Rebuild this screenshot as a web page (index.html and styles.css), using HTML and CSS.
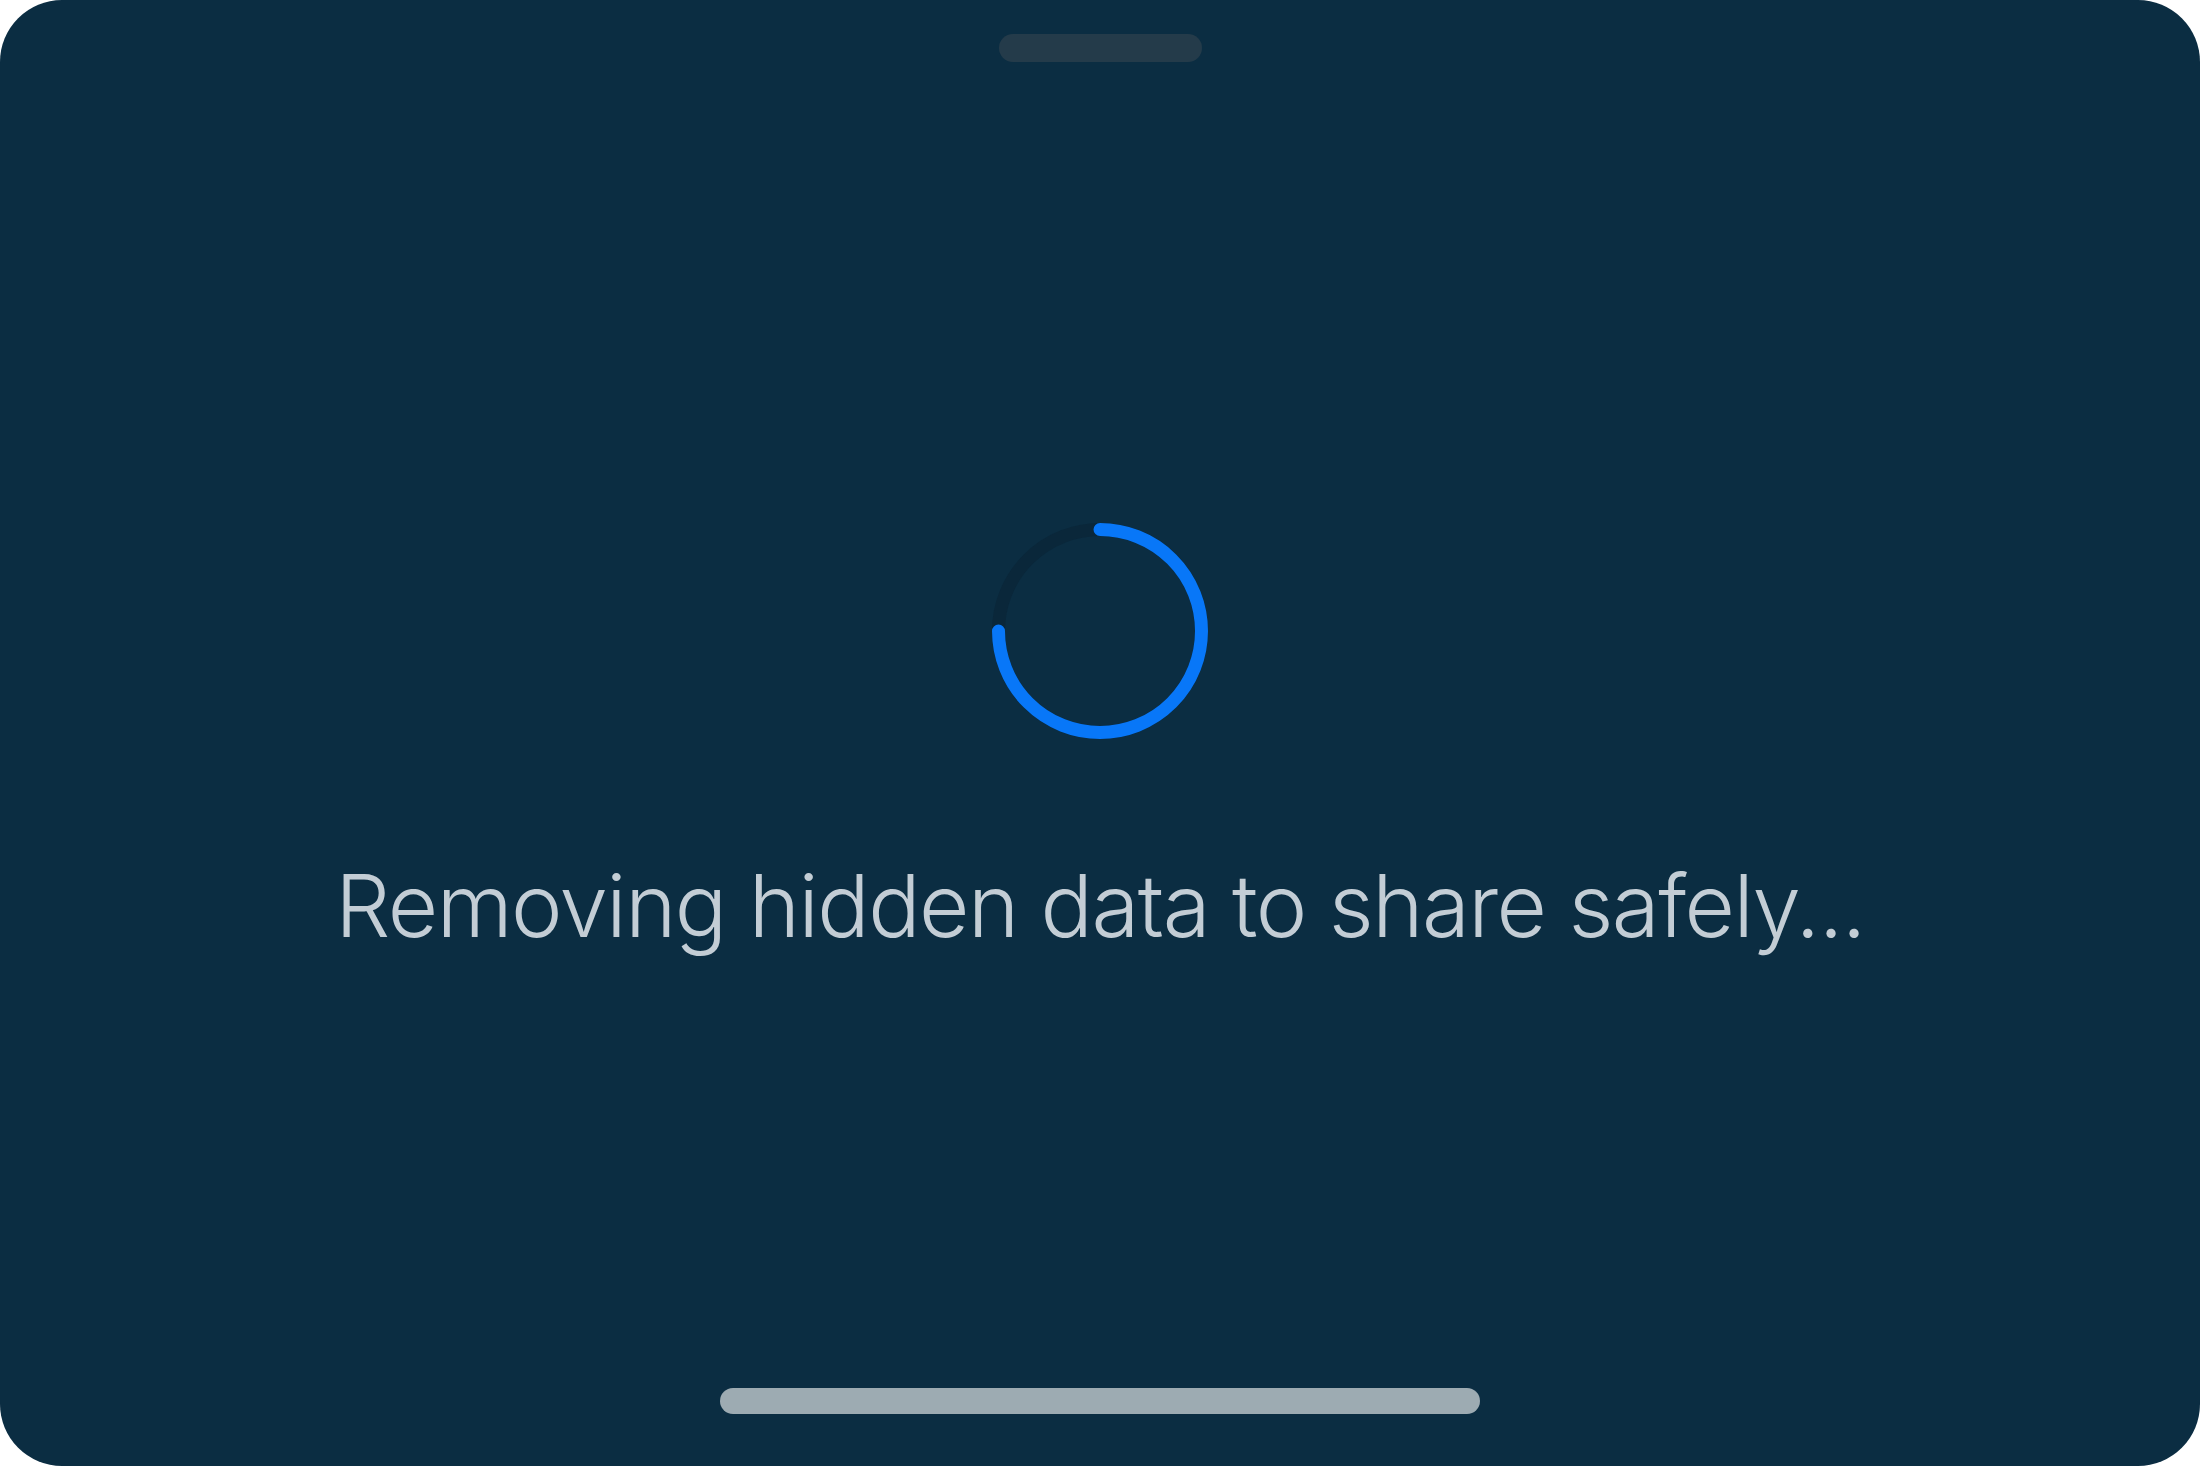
FILE: index.html
```html
<!DOCTYPE html>
<html lang="en">
<head>
<meta charset="utf-8">
<title>Removing hidden data</title>
<link rel="stylesheet" href="styles.css">
</head>
<body>
<div class="sheet">
  <div class="grabber"></div>
  <div class="spinner">
    <svg viewBox="0 0 216 216" width="216" height="216" aria-hidden="true">
      <circle class="track" cx="108" cy="108" r="101.5"></circle>
      <path class="arc" d="M108 6.5 A101.5 101.5 0 1 1 6.5 108"></path>
    </svg>
  </div>
  <p class="status">Removing hidden data to share safely...</p>
  <div class="spacer"></div>
  <div class="home-indicator"></div>
</div>
</body>
</html>
```

FILE: styles.css
```css
html, body {
  margin: 0;
  padding: 0;
  background: #ffffff;
}

body {
  width: 2200px;
  height: 1466px;
  overflow: hidden;
}

.sheet {
  box-sizing: border-box;
  width: 2200px;
  height: 1466px;
  background: #0b2d42;
  border-radius: 62px;
  display: flex;
  flex-direction: column;
  align-items: center;
  padding-top: 34px;
  padding-bottom: 52px;
}

.grabber {
  width: 203px;
  height: 28px;
  border-radius: 14px;
  background: #243b4a;
  flex: none;
}

.spinner {
  margin-top: 461px;
  width: 216px;
  height: 216px;
  flex: none;
}

.spinner svg {
  display: block;
}

.track {
  fill: none;
  stroke: #0a273a;
  stroke-width: 13;
}

.arc {
  fill: none;
  stroke: #0877f8;
  stroke-width: 13;
  stroke-linecap: round;
}

.status {
  margin: 115px 0 0 0;
  font-family: Inter, "Liberation Sans", sans-serif;
  font-weight: 300;
  font-size: 87px;
  line-height: 1.2;
  letter-spacing: -1.5px;
  color: #c3cdd5;
  white-space: nowrap;
  flex: none;
}

.spacer {
  flex: 1;
}

.home-indicator {
  width: 760px;
  height: 26px;
  border-radius: 13px;
  background: #9dabb2;
  flex: none;
}
```
